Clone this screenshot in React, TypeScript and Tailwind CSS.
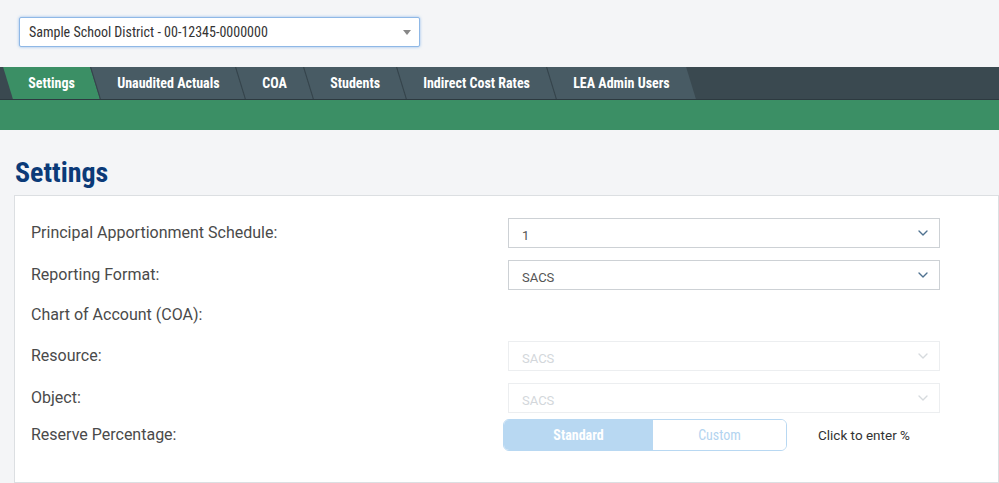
import { ChevronDown } from "lucide-react";

const tabs = [
  "Settings",
  "Unaudited Actuals",
  "COA",
  "Students",
  "Indirect Cost Rates",
  "LEA Admin Users",
];

type FieldSelectProps = {
  value: string;
  disabled?: boolean;
};

function FieldSelect({ value, disabled }: FieldSelectProps) {
  return (
    <div
      className={
        disabled
          ? "flex h-[30px] w-[432px] items-center justify-between border border-[#eceef0] bg-white pl-[13px] pr-[8px]"
          : "flex h-[30px] w-[432px] items-center justify-between border border-[#cdd1d5] bg-white pl-[13px] pr-[8px]"
      }
    >
      <span
        className={
          disabled
            ? "pt-[5px] text-[13px] text-[#d3d7db]"
            : "pt-[5px] text-[13px] text-[#555]"
        }
      >
        {value}
      </span>
      <ChevronDown
        size={16}
        strokeWidth={2}
        className={disabled ? "text-[#d6dade]" : "text-[#4f7290]"}
      />
    </div>
  );
}

function Row({
  label,
  children,
  className,
}: {
  label: string;
  children?: React.ReactNode;
  className: string;
}) {
  return (
    <div className={`flex items-center ${className}`}>
      <div className="w-[477px] text-[16px] text-[#4a4a4a]">{label}</div>
      {children}
    </div>
  );
}

export default function App() {
  return (
    <div className="min-h-[483px] bg-[#f4f5f7] font-['Roboto',sans-serif]">
      <div className="px-[19px] pt-[17px] pb-[20px]">
        <div className="flex h-[30px] w-[401px] items-center justify-between rounded-[2px] border border-[#8fb8e6] bg-white pl-[9px] pr-[8px] shadow-[0_0_3px_rgba(80,150,230,0.6)]">
          <span className="text-[14px] text-[#333] [font-stretch:condensed]">
            Sample School District - 00-12345-0000000
          </span>
          <span className="h-0 w-0 border-x-[4px] border-t-[5px] border-x-transparent border-t-[#888]" />
        </div>
      </div>

      <div className="flex h-[33px] overflow-hidden border-b border-[#2d3a40] bg-[#3a4950] [font-stretch:condensed]">
        <div className="ml-[8px] flex">
          {tabs.map((tab, i) => (
            <div
              key={tab}
              className={
                i === 0
                  ? "flex h-[32px] skew-x-[17deg] items-center bg-[#3b8f65] px-[20px]"
                  : "flex h-[32px] skew-x-[17deg] items-center border-l border-[#34434a] bg-[#485b64] px-[21px]"
              }
            >
              <span className="-skew-x-[17deg] text-[14px] font-bold text-white">
                {tab}
              </span>
            </div>
          ))}
        </div>
      </div>
      <div className="h-[30px] bg-[#3b8f65]" />

      <h1 className="mt-[25px] mb-[5px] h-[35px] pl-[15px] text-[28px] leading-[35px] font-bold text-[#0b3a78] [font-stretch:condensed]">
        Settings
      </h1>

      <div className="ml-[14px] h-[288px] border border-[#dcdfe2] bg-white pt-[22px] pl-[16px]">
        <Row label="Principal Apportionment Schedule:" className="h-[30px]">
          <FieldSelect value="1" />
        </Row>
        <Row label="Reporting Format:" className="mt-[12px] h-[30px]">
          <FieldSelect value="SACS" />
        </Row>
        <Row label="Chart of Account (COA):" className="mt-[10px] h-[30px]" />
        <Row label="Resource:" className="mt-[11px] h-[30px]">
          <FieldSelect value="SACS" disabled />
        </Row>
        <Row label="Object:" className="mt-[12px] h-[30px]">
          <FieldSelect value="SACS" disabled />
        </Row>
        <Row label="Reserve Percentage:" className="mt-[6px] h-[32px]">
          <div className="-ml-[5px] flex h-[32px] w-[284px] overflow-hidden rounded-[6px] border border-[#b8d8f2] [font-stretch:condensed]">
            <div className="flex w-[149px] items-center justify-center bg-[#b8d8f2] text-[14px] font-bold text-white">
              Standard
            </div>
            <div className="flex flex-1 items-center justify-center bg-white text-[14px] text-[#b3d4f0]">
              Custom
            </div>
          </div>
          <span className="ml-[31px] text-[13.5px] text-[#333]">
            Click to enter %
          </span>
        </Row>
      </div>
    </div>
  );
}
